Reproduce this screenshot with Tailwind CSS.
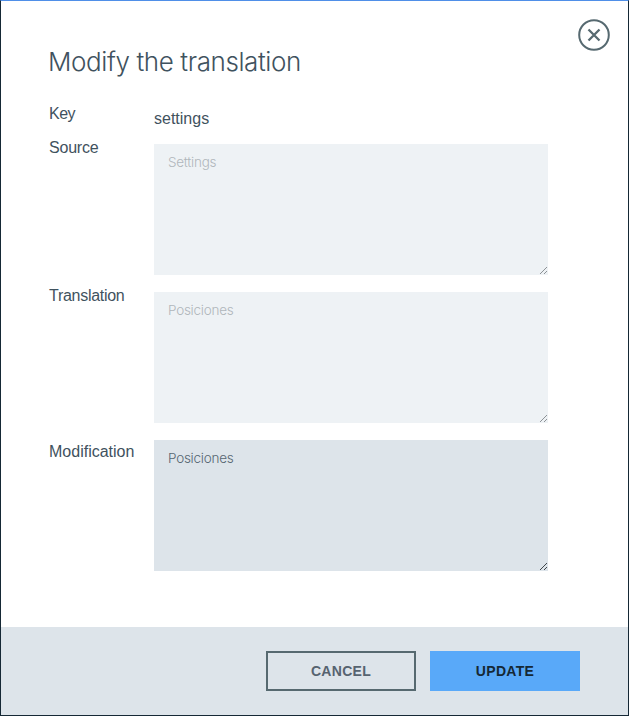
<!DOCTYPE html>
<html lang="en">
<head>
<meta charset="utf-8">
<title>Modify the translation</title>
<script src="https://cdn.jsdelivr.net/npm/@tailwindcss/browser@4"></script>
</head>
<body class="bg-white font-['Liberation_Sans',Arial,sans-serif] text-[#3f525e]">
<div class="relative flex h-[716px] w-[629px] flex-col border border-t-[#4f8fe8] border-r-[#152835] border-b-[#152835] border-l-[#152835] bg-white">
  <button aria-label="Close" class="absolute top-[18px] right-[18px] size-8">
    <svg viewBox="0 0 32 32" class="size-8" fill="none" stroke="#566970"><circle cx="16" cy="16" r="14.8" stroke-width="2"/><path d="M10.5 10.5 21.5 21.5M21.5 10.5 10.5 21.5" stroke-width="2.3"/></svg>
  </button>
  <main class="flex-1 pt-[41px] pl-12">
    <h1 class="-ml-px h-10 w-max font-[Inter,sans-serif] text-[26px] leading-10 font-light tracking-[-0.4px]">Modify the translation</h1>
    <div class="mt-[22px] flex h-[40px] text-base leading-5">
      <div class="w-[105px] tracking-[-0.5px]">Key</div><div class="pt-[5px]">settings</div>
    </div>
    <div class="flex h-[148px] text-base leading-5">
      <label class="w-[105px] shrink-0 -mt-[6px] tracking-[-0.2px]">Source</label>
      <div class="relative h-[131px] w-[394px]">
        <textarea disabled class="block size-full resize-none bg-[#eef2f5] px-[14px] py-[8px] font-[Inter,sans-serif] text-[13.5px] leading-5 font-light tracking-[-0.25px] text-[#b0b6bb]">Settings</textarea>
        <svg class="absolute right-0 bottom-0 size-[9px]" viewBox="0 0 9 9" stroke="#8d9296" stroke-width="1"><path d="M1 8 8 1M5 8 8 5"/></svg>
      </div>
    </div>
    <div class="flex h-[148px] text-base leading-5">
      <label class="w-[105px] shrink-0 -mt-[6px] tracking-[-0.28px]">Translation</label>
      <div class="relative h-[131px] w-[394px]">
        <textarea disabled class="block size-full resize-none bg-[#eef2f5] px-[14px] py-[8px] font-[Inter,sans-serif] text-[13.5px] leading-5 font-light tracking-[-0.25px] text-[#b0b6bb]">Posiciones</textarea>
        <svg class="absolute right-0 bottom-0 size-[9px]" viewBox="0 0 9 9" stroke="#8d9296" stroke-width="1"><path d="M1 8 8 1M5 8 8 5"/></svg>
      </div>
    </div>
    <div class="flex h-[131px] text-base leading-5">
      <label class="w-[105px] shrink-0 pt-[2px]">Modification</label>
      <div class="relative h-[131px] w-[394px]">
        <textarea class="block size-full resize-none bg-[#dde4ea] px-[14px] py-[8px] font-[Inter,sans-serif] text-[13.5px] leading-5 font-light tracking-[-0.25px] text-[#566672]">Posiciones</textarea>
        <svg class="absolute right-0 bottom-0 size-[9px]" viewBox="0 0 9 9" stroke="#42484c" stroke-width="1"><path d="M1 8 8 1M5 8 8 5"/></svg>
      </div>
    </div>
  </main>
  <footer class="flex h-[88px] items-center justify-end gap-[14px] bg-[#dde4ea] pr-12">
    <button class="h-10 w-[150px] border-2 border-[#566970] text-[14px] font-bold tracking-[0.3px] text-[#566370]">CANCEL</button>
    <button class="h-10 w-[150px] bg-[#59a9f9] text-[14px] font-bold tracking-[0.3px] text-[#152835]">UPDATE</button>
  </footer>
</div>
</body>
</html>
